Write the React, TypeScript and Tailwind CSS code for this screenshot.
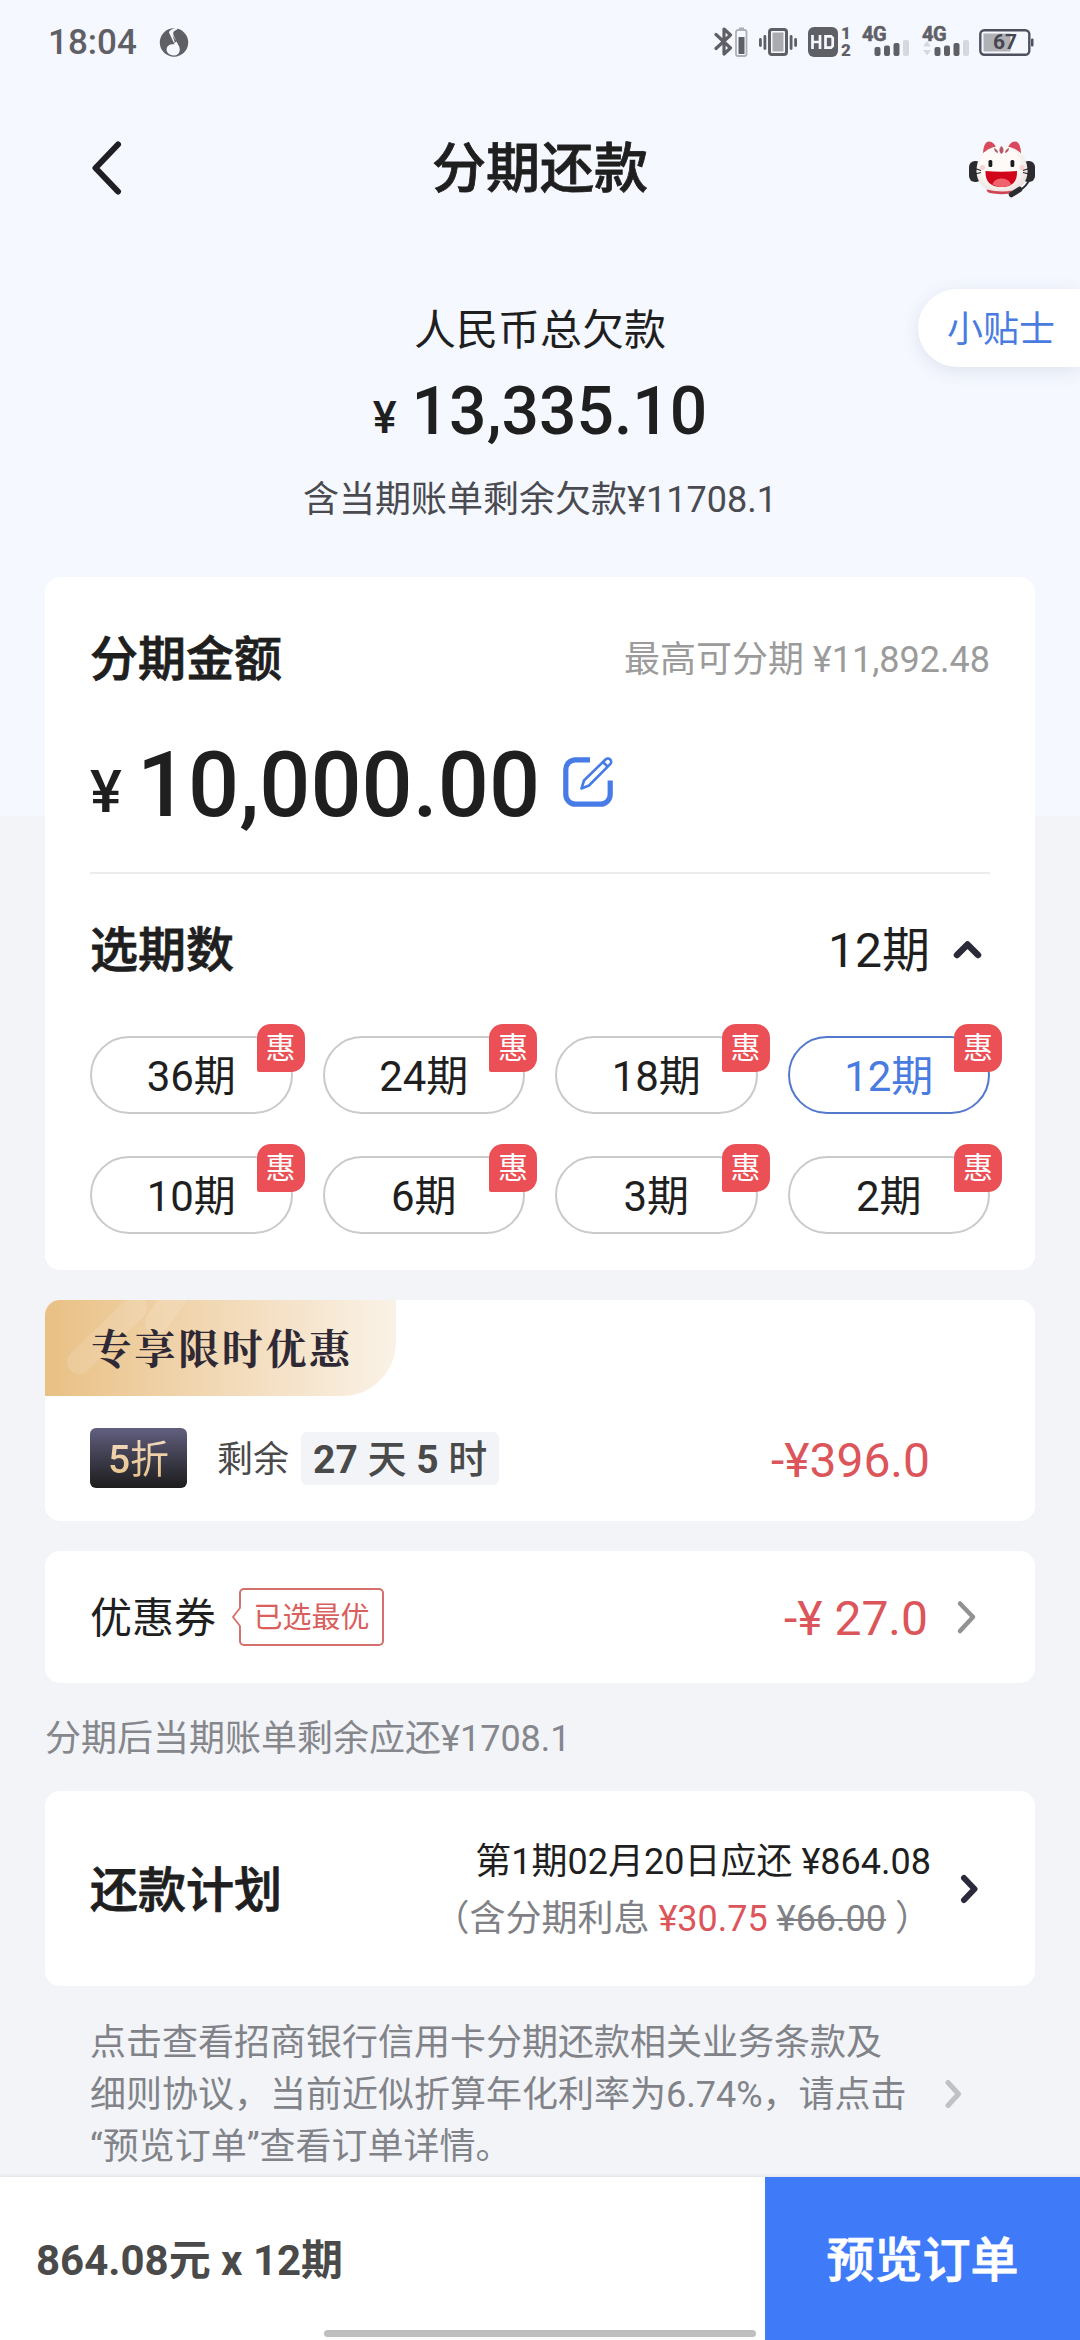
import React from "react";
import clsx from "clsx";

const periods = [36, 24, 18, 12, 10, 6, 3, 2];
const selected = 12;

const Chevron = ({
  d,
  w,
  h,
  color,
  stroke,
}: {
  d: string;
  w: number;
  h: number;
  color: string;
  stroke: number;
}) => (
  <svg width={w} height={h} viewBox={`0 0 ${w} ${h}`} fill="none" className="shrink-0">
    <path
      d={d}
      stroke={color}
      strokeWidth={stroke}
      strokeLinecap="round"
      strokeLinejoin="round"
    />
  </svg>
);

const Signal = ({ arrows }: { arrows?: boolean }) => (
  <div className="relative h-[36px] w-[48px]">
    <svg width="48" height="36" viewBox="0 0 48 36">
      {arrows && (
        <g fill="#d5d8df">
          <path d="M1 22.5 5 17l4 5.5z" />
          <path d="M1 26h8l-4 5.5z" />
        </g>
      )}
      <g fill="#5f6066">
        <rect x="12.5" y="23" width="6" height="9" rx="2" />
        <rect x="22" y="21.5" width="6" height="10.5" rx="2" />
        <rect x="31.5" y="19" width="6" height="13" rx="2" />
      </g>
      <rect x="41" y="16" width="6" height="16" rx="2" fill="#d5d8df" />
    </svg>
    <span className="absolute -top-[2px] left-0 text-[20px] leading-[24px] font-bold tracking-[-0.5px] [-webkit-text-stroke:0.5px_#5f6066]">
      4G
    </span>
  </div>
);

const StatusBar = () => (
  <div className="flex h-[84px] items-center pl-[48px] pr-[46px] text-[#5f6066]">
    <span className="text-[35px] leading-none font-medium">18:04</span>
    <svg width="30" height="32" viewBox="0 0 30 32" className="ml-[22px]">
      <circle cx="15" cy="16.5" r="14.2" fill="#5f6066" />
      <path
        d="M20 0.5 17.5 4c-2.500.5-4 2.500-3 5l4.500 9.500c3 4 2.500 11-4 11-6.500 0-9-5.500-6.500-9 1.500-2 4-2.500 7-2.200L10 6.500C10.500 3.500 15 2.500 20 0.500z"
        fill="#f5f8ff"
      />
      <path d="m13.500 9 4.500 7-4.500.3 2.500.7z" fill="#5f6066" />
    </svg>

    <div className="ml-auto flex items-center">
      <svg width="34" height="32" viewBox="0 0 34 32" fill="none">
        <path
          d="M2 8.500 16.500 22l-6.500 6V3l6.500 6L2 22.500"
          stroke="#5f6066"
          strokeWidth="3.200"
          strokeLinejoin="round"
          strokeLinecap="round"
        />
        <rect x="22" y="4" width="10.500" height="26" rx="2" stroke="#aeb0b6" strokeWidth="1.800" />
        <rect x="25" y="1.500" width="5" height="2.500" fill="#aeb0b6" />
        <rect x="24.500" y="11" width="6" height="17" fill="#5f6066" />
      </svg>
      <svg width="38" height="32" viewBox="0 0 38 32" className="ml-[11px]">
        <rect x="10.500" y="3.500" width="17" height="25" rx="2.500" fill="#f5f8ff" stroke="#5f6066" strokeWidth="3" />
        <rect x="13.500" y="6.500" width="11" height="19" fill="#aaabaf" />
        <g fill="#5f6066">
          <rect x="0" y="12" width="2.800" height="9" rx="1.400" />
          <rect x="4.500" y="9" width="2.800" height="15" rx="1.400" />
          <rect x="30.700" y="9" width="2.800" height="15" rx="1.400" />
          <rect x="35.200" y="12" width="2.800" height="9" rx="1.400" />
        </g>
      </svg>
      <svg width="30" height="32" viewBox="0 0 30 32" className="ml-[11px]">
        <rect x="0" y="1" width="30" height="30" rx="6" fill="#5f6066" />
        <path
          d="M4.500 9v14M12 9v14M4.500 16H12M17.500 10.300h5.500l1.700 1.700v8l-1.700 1.700h-5.500z"
          stroke="#f5f8ff"
          strokeWidth="2.700"
          fill="none"
        />
      </svg>
      <div className="ml-[2px] flex w-[12px] flex-col items-center text-[17px] leading-[17px] font-black">
        <span>1</span>
        <span>2</span>
      </div>
      <div className="ml-[10px]">
        <Signal />
      </div>
      <div className="ml-[12px]">
        <Signal arrows />
      </div>
      <div className="relative ml-[9px] h-[32px] w-[55px]">
        <svg width="55" height="32" viewBox="0 0 55 32">
          <rect x="1.300" y="4.300" width="49" height="24.500" rx="4" fill="none" stroke="#4f5160" strokeWidth="2.400" />
          <rect x="4.500" y="7.500" width="27" height="18" fill="#b0b1b5" />
          <rect x="52" y="12.500" width="2.500" height="8" rx="1" fill="#4f5160" />
        </svg>
        <span className="absolute top-[4px] left-[1px] w-[50px] text-center text-[21px] leading-[25px] font-bold text-[#45474f]">
          67
        </span>
      </div>
    </div>
  </div>
);

const Mascot = () => (
  <svg width="68" height="60" viewBox="0 0 68 60">
    <defs>
      <radialGradient id="face" cx="0.45" cy="0.4" r="0.62">
        <stop offset="0.6" stopColor="#fdfaf8" />
        <stop offset="1" stopColor="#e9dfda" />
      </radialGradient>
    </defs>
    <path d="M15 17C15 9 17 3.500 21 3.500c3.500 0 6 3 7.500 7z" fill="#d9485c" />
    <path d="M53 17C53 9 51 3.500 47 3.500c-3.500 0-6 3-7.500 7z" fill="#d9485c" />
    <rect x="1" y="23" width="13" height="21" rx="6" fill="#2c2c30" />
    <rect x="54" y="23" width="13" height="21" rx="6" fill="#2c2c30" />
    <path
      d="M8.500 34C8 17 20 8 34 8s26 9 25.500 26.500c-.5 9-6 15-13 18.500-8 3-17 3-25 0C14 49.500 9 43 8.500 34z"
      fill="url(#face)"
    />
    <path d="M33.500 8c3 3 2.500 6 0 8-2.500-2-3-5 0-8zM26 10c3 1 4 3 4 5-3-.5-4-3-4-5zM41 10c-3 1-4 3-4 5 3-.5 4-3 4-5z" fill="#b5566a" />
    <circle cx="14.500" cy="29.500" r="2.500" fill="#f6d3d2" />
    <circle cx="54" cy="29.500" r="2.500" fill="#f6d3d2" />
    <rect x="20.500" y="22" width="3.800" height="7" rx="1.500" fill="#1d1d1f" />
    <rect x="42.500" y="22" width="3.800" height="7" rx="1.500" fill="#1d1d1f" />
    <path d="M17.500 33q15.500 1.500 31.500 0c.5 10-4 16-15.500 16S17 43 17.500 33z" fill="#d2061b" />
    <path d="M24.500 46.500c2-8 16-8 18.500 0-5 3.500-13.500 3-18.500 0z" fill="#f0626c" />
    <path d="M18.500 51.500q14 3.500 26 1l-2.500 3q-11 1.500-20-.5c-2-.5-3.500-2-3.500-3.500z" fill="#cf4552" />
    <path d="M7 30.500l6 2M7 36l6-1.500M61 30.500l-6 2M61 36l-6-1.500" stroke="#222" strokeWidth="1.200" />
    <path d="M61 42q-2 6-9 10" stroke="#2c2c30" strokeWidth="2" fill="none" />
    <path d="m43.500 56.500 8-5" stroke="#2c2c30" strokeWidth="5.500" strokeLinecap="round" />
  </svg>
);

const EditIcon = () => (
  <svg width="50" height="50" viewBox="0 0 50 50" fill="none" stroke="#477be6">
    <path d="M27 2.800H12.500A9.700 9.700 0 0 0 2.800 12.500v25a9.700 9.700 0 0 0 9.700 9.700h25a9.700 9.700 0 0 0 9.700-9.700V23.500" strokeWidth="5.200" />
    <path d="M18.500 31.500 21 23.500 42.500 2.500a3.300 3.300 0 0 1 4.700 4.700L26 28.500zM40 5l5 5" strokeWidth="2.600" strokeLinejoin="round" />
  </svg>
);

const PeriodButton = ({ value }: { value: number }) => (
  <button
    className={clsx(
      "relative flex h-[78px] items-center justify-center rounded-full border-2 pt-[3px] text-[42px] leading-none",
      value === selected ? "border-[#5279cc] text-[#4a7be0]" : "border-[#cacaca] text-[#1f1f1f]"
    )}
  >
    {value}期
    <span className="absolute -top-[14px] -right-[14px] flex h-[48px] w-[48px] items-center justify-center rounded-[14px] rounded-bl-[2px] bg-[#ea5055] text-[30px] text-white">
      惠
    </span>
  </button>
);

const App = () => {
  return (
    <div className="relative flex h-[2340px] w-[1080px] flex-col overflow-hidden bg-[linear-gradient(#f5f8ff_816px,#f2f4f8_816px)] font-[Roboto,'Noto_Sans_CJK_SC',sans-serif] text-[#1f1f1f]">
      <StatusBar />

      {/* Nav bar */}
      <div className="flex h-[168px] items-center justify-between pl-[92px] pr-[44px]">
        <div className="w-[68px]">
          <Chevron d="M26 3.500 3.500 27 26 50.500" w={30} h={54} color="#1f1f22" stroke={6} />
        </div>
        <h1 className="ml-[-48px] pt-[4px] text-[54px] leading-none font-medium [-webkit-text-stroke:0.8px_#1f1f1f]">
          分期还款
        </h1>
        <Mascot />
      </div>

      {/* Total debt */}
      <div className="relative flex flex-col items-center pt-[49px] pb-[52px]">
        <div className="text-[42px] leading-[60px]">人民币总欠款</div>
        <div className="mt-[11px] text-[66px] leading-[80px] font-medium">
          <span className="relative -top-[1px] mr-[15px] text-[45px] leading-none">¥</span>13,335.10
        </div>
        <div className="mt-[23px] text-[36px] leading-[50px] text-[#4a4b50]">
          含当期账单剩余欠款¥11708.1
        </div>
        <div className="absolute top-[37px] right-0 flex h-[78px] w-[162px] items-center rounded-l-full bg-white pt-[4px] pl-[29px] text-[36px] leading-none text-[#4a7be0] shadow-[0_4px_18px_rgba(60,70,100,0.12)]">
          小贴士
        </div>
      </div>

      {/* Amount and periods */}
      <div className="mx-[45px] flex flex-col rounded-[15px] bg-white px-[45px] pt-[45px] pb-[36px]">
        <div className="flex h-[72px] items-center justify-between pt-[4px] leading-none">
          <span className="text-[48px] font-medium [-webkit-text-stroke:0.8px_#1f1f1f]">分期金额</span>
          <span className="text-[36px] text-[#9b9b9b]">最高可分期 ¥11,892.48</span>
        </div>
        <div className="mt-[38px] flex h-[106px] items-center">
          <div className="pt-[2px] text-[90px] leading-[104px] font-medium">
            <span className="relative -top-[4px] mr-[15px] text-[60px] leading-none">¥</span>10,000.00
          </div>
          <div className="mb-[7px] ml-[23px]">
            <EditIcon />
          </div>
        </div>
        <div className="mt-[34px] h-[2px] bg-[#ebecee]" />
        <div className="mt-[39px] flex h-[72px] items-center leading-none">
          <span className="pt-[4px] text-[48px] font-medium [-webkit-text-stroke:0.8px_#1f1f1f]">选期数</span>
          <span className="ml-auto mr-[23px] pt-[4px] text-[48px]">12期</span>
          <div className="mr-[8px]">
            <Chevron d="M4 15 14.500 4.500 25 15" w={29} h={19} color="#2b2a38" stroke={6.5} />
          </div>
        </div>
        <div className="mt-[51px] grid grid-cols-4 gap-x-[30px] gap-y-[42px]">
          {periods.map((p) => (
            <PeriodButton key={p} value={p} />
          ))}
        </div>
      </div>

      {/* Limited time offer */}
      <div className="mx-[45px] mt-[30px] h-[221px] overflow-hidden rounded-[15px] bg-white">
        <div className="relative flex h-[96px] w-[351px] items-center overflow-hidden rounded-br-[54px] bg-linear-to-r from-[#e9c084] to-[#faf2e7] pb-[4px] pl-[46px]">
          <svg width="180" height="96" viewBox="0 0 180 96" className="absolute top-0 left-0">
            <path d="M34 62 90 8M112 22 132 -6" stroke="#fff" strokeOpacity="0.13" strokeWidth="24" strokeLinecap="round" />
          </svg>
          <span className="relative font-['Noto_Serif_CJK_SC','Noto_Sans_CJK_SC',serif] text-[41px] leading-none font-bold tracking-[2.600px] text-[#2f2935]">
            专享限时优惠
          </span>
        </div>
        <div className="flex h-[124px] items-center pl-[45px] pr-[105px] leading-none">
          <div className="flex h-[60px] w-[97px] items-center justify-center rounded-[6px] bg-linear-to-b from-[#626080] to-[#1d1d1e] pt-[3px]">
            <span className="bg-linear-to-b from-[#f0dcc0] to-[#e8bf85] bg-clip-text text-[39px] leading-[50px] text-transparent">
              <span className="font-medium">5</span>折
            </span>
          </div>
          <span className="ml-[30px] pt-[4px] text-[36px] text-[#4a4a4a]">剩余</span>
          <span className="ml-[12px] flex h-[53px] items-center rounded-[6px] bg-[#f2f4f8] px-[12px] pt-[4px] text-[39px] font-medium text-[#4a4a4a]">
            <b>27</b>&nbsp;天&nbsp;<b>5</b>&nbsp;时
          </span>
          <span className="ml-auto pt-[5px] text-[48px] text-[#dc555a]">-¥396.0</span>
        </div>
      </div>

      {/* Coupon */}
      <div className="mx-[45px] mt-[30px] flex h-[132px] items-center rounded-[15px] bg-white pl-[45px] pr-[58px] leading-none">
        <span className="pt-[4px] text-[42px]">优惠券</span>
        <div className="relative ml-[23px] flex h-[58px] w-[145px] items-center justify-center rounded-[5px] border-2 border-[#d4706c] pt-[2px] text-[29px] text-[#d9605c]">
          <svg width="12" height="26" viewBox="0 0 12 26" className="absolute top-[14px] -left-[10px]">
            <path d="M9 1v24h3V1z" fill="#fff" />
            <path d="M9 0v4L2 13l7 9v4" fill="#fff" stroke="#d4706c" strokeWidth="1.800" />
          </svg>
          已选最优
        </div>
        <span className="ml-auto mr-[28px] pt-[4px] text-[48px] text-[#dc555a]">-¥ 27.0</span>
        <Chevron d="M4 3.500 17 17 4 31" w={21} h={35} color="#929292" stroke={4.5} />
      </div>

      <div className="ml-[45px] h-[108px] pt-[2px] text-[36px] leading-[108px] text-[#85878c]">
        分期后当期账单剩余应还¥1708.1
      </div>

      {/* Repayment plan */}
      <div className="mx-[45px] flex h-[195px] items-center rounded-[15px] bg-white pl-[45px] pr-[56px]">
        <span className="pt-[4px] text-[48px] leading-none font-medium [-webkit-text-stroke:0.8px_#1f1f1f]">
          还款计划
        </span>
        <div className="ml-auto mr-[28px] pt-[5px] text-right text-[36px] leading-[57px]">
          <div>第1期02月20日应还 ¥864.08</div>
          <div className="text-[#7f8186]">
            （含分期利息 <span className="text-[#dc555a]">¥30.75</span>{" "}
            <span className="line-through decoration-2">¥66.00</span> ）
          </div>
        </div>
        <Chevron d="M5 4 15.500 15 5 26" w={20} h={30} color="#2b2a3c" stroke={6} />
      </div>

      {/* Terms */}
      <div className="mt-[31px] flex items-center pl-[90px] pr-[116px] text-[#818389]">
        <p className="text-[36px] leading-[52px] whitespace-nowrap">
          点击查看招商银行信用卡分期还款相关业务条款及
          <br />
          细则协议，当前近似折算年化利率为6.74%，请点击
          <br />
          “预览订单”查看订单详情。
        </p>
        <div className="ml-auto mb-[3px]">
          <Chevron d="M4 3.500 14.500 15 4 26.500" w={20} h={30} color="#c0c1c4" stroke={5} />
        </div>
      </div>

      {/* Footer */}
      <div className="mt-auto flex h-[163px] bg-white leading-none shadow-[0_-2px_2px_rgba(40,50,70,0.06)]">
        <div className="flex flex-1 items-center pt-[5px] pl-[36px] text-[42px] font-bold text-[#4a4a4a]">
          864.08元 x 12期
        </div>
        <button className="w-[315px] bg-[#3f7bf9] pt-[5px] text-[48px] font-medium text-white [-webkit-text-stroke:0.8px_#fff]">
          预览订单
        </button>
      </div>
      <div className="absolute bottom-[3px] left-[324px] h-[7px] w-[432px] rounded-full bg-[#bfbfbf]" />
    </div>
  );
};

export default App;
